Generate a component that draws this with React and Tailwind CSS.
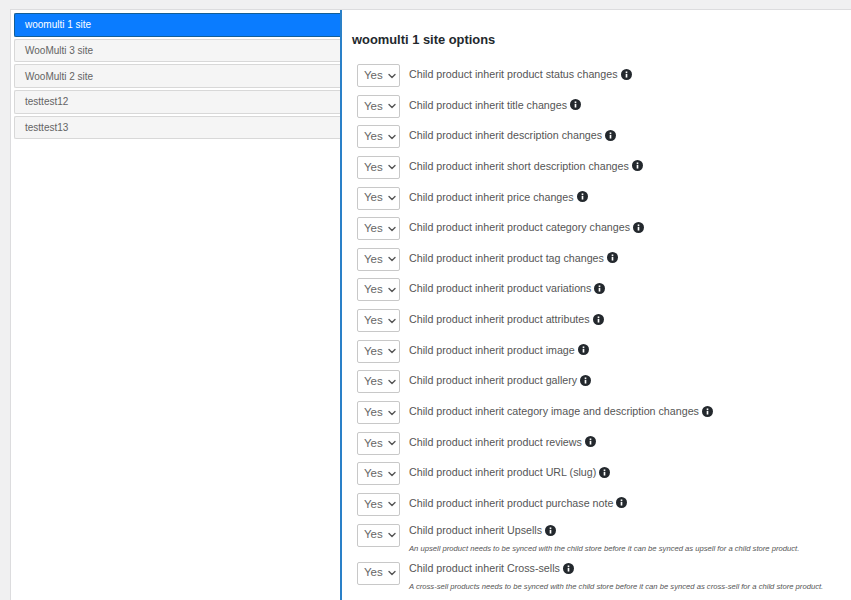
import { ChevronDown } from 'lucide-react';

const sites = [
  { name: 'woomulti 1 site', active: true },
  { name: 'WooMulti 3 site' },
  { name: 'WooMulti 2 site' },
  { name: 'testtest12' },
  { name: 'testtest13' },
];

const options = [
  { label: 'Child product inherit product status changes' },
  { label: 'Child product inherit title changes' },
  { label: 'Child product inherit description changes' },
  { label: 'Child product inherit short description changes' },
  { label: 'Child product inherit price changes' },
  { label: 'Child product inherit product category changes' },
  { label: 'Child product inherit product tag changes' },
  { label: 'Child product inherit product variations' },
  { label: 'Child product inherit product attributes' },
  { label: 'Child product inherit product image' },
  { label: 'Child product inherit product gallery' },
  { label: 'Child product inherit category image and description changes' },
  { label: 'Child product inherit product reviews' },
  { label: 'Child product inherit product URL (slug)' },
  { label: 'Child product inherit product purchase note' },
  {
    label: 'Child product inherit Upsells',
    note: 'An upsell product needs to be synced with the child store before it can be synced as upsell for a child store product.',
  },
  {
    label: 'Child product inherit Cross-sells',
    note: 'A cross-sell products needs to be synced with the child store before it can be synced as cross-sell for a child store product.',
  },
];

function InfoIcon() {
  return (
    <svg className="w-[11px] h-[11px] ml-[3px] shrink-0" viewBox="0 0 16 16">
      <circle cx="8" cy="8" r="8" fill="#23282d" />
      <rect x="6.8" y="7" width="2.4" height="5.4" fill="#fff" />
      <rect x="6.8" y="3.6" width="2.4" height="2.2" fill="#fff" />
    </svg>
  );
}

function OptionRow({ label, note }) {
  return (
    <div className={`flex items-start ${note ? 'h-[38px]' : 'h-[30.65px]'}`}>
      <div className="w-[43px] h-[23px] shrink-0 flex items-center pl-[6px] gap-[3px] bg-white border border-[#c8c8c8] rounded-[2px] text-[11.5px] text-[#666]">
        Yes
        <ChevronDown size={12} strokeWidth={2.75} className="text-[#555]" />
      </div>
      <div className="ml-[9px] min-w-0">
        <div className={`flex items-center text-[#555] text-[10.7px] ${note ? 'h-[13px]' : 'h-[20px]'}`}>
          {label}
          <InfoIcon />
        </div>
        {note && <p className="mt-[7px] text-[7.65px] leading-[9px] italic text-[#555] whitespace-nowrap">{note}</p>}
      </div>
    </div>
  );
}

export default function App() {
  return (
    <div className="h-[600px] overflow-hidden bg-[#f0f0f1] pt-[9px] pl-[10px] font-['Liberation_Sans',Arial,sans-serif]">
      <div className="flex h-[600px] bg-white border-l border-t border-[#dcdcde]">
        <div className="w-[329px] shrink-0 pt-[3px] pl-[3px] flex flex-col gap-[2px]">
          {sites.map((site) =>
            site.active ? (
              <div key={site.name} className="h-[23.7px] flex items-center pl-[10px] text-[10px] text-white bg-[#0a7cff] rounded-l-[2px] border border-r-0 border-[#135e96]">
                {site.name}
              </div>
            ) : (
              <div key={site.name} className="h-[23.7px] flex items-center pl-[10px] text-[10px] text-[#646464] bg-[#f5f5f5] rounded-l-[2px] border border-r-0 border-[#d8d8d8]">
                {site.name}
              </div>
            ),
          )}
        </div>
        <div className="flex-1 border-l-2 border-[#2a80c8] pl-[10px]">
          <h2 className="mt-[22px] mb-[16px] text-[12.9px] leading-[16px] font-bold text-[#23282d]">woomulti 1 site options</h2>
          <div className="pl-[5px]">
            {options.map((option) => (
              <OptionRow key={option.label} label={option.label} note={option.note} />
            ))}
          </div>
        </div>
      </div>
    </div>
  );
}
